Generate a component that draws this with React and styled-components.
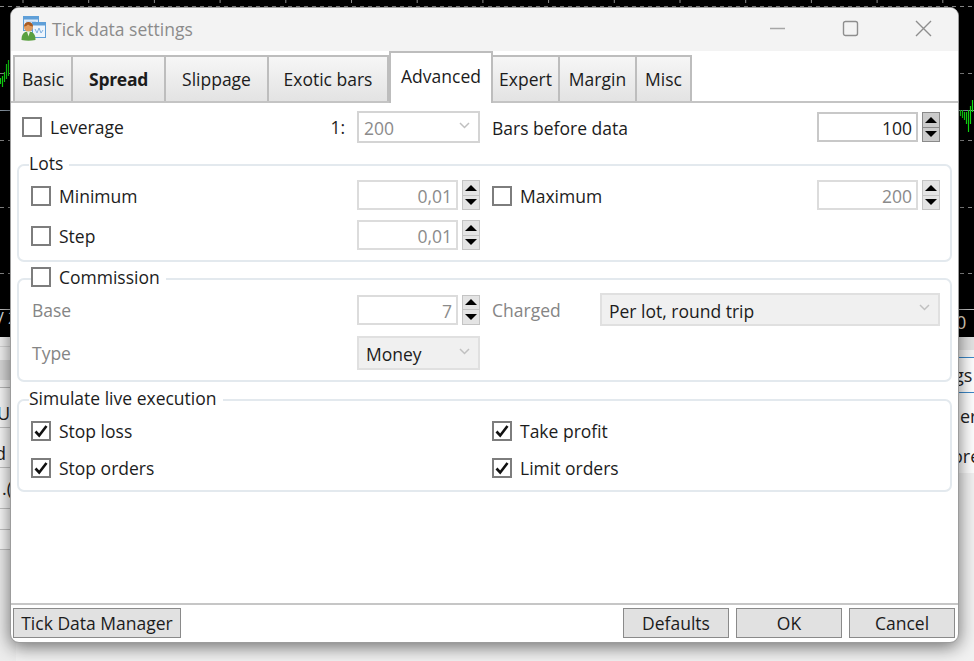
import React from 'react';
import styled, { createGlobalStyle } from 'styled-components';

const Global = createGlobalStyle`
  html, body { margin: 0; padding: 0; background: #f2f2f2; }
  * { box-sizing: border-box; }
`;

const FONT = `"Open Sans", "Noto Sans", "Liberation Sans", sans-serif`;

const Desk = styled.div`
  position: relative;
  width: 974px;
  height: 661px;
  overflow: hidden;
  background: #f2f2f2;
  font-family: ${FONT};
  font-size: 17.5px;
  color: #1c1c1c;
`;
const ChartArea = styled.svg`
  display: block;
  width: 974px;
  height: 337px;
  background: #000;
`;
const Behind = styled.div`
  display: flex;
  justify-content: space-between;
  height: 324px;
`;
const SideList = styled.div`
  width: 16px;
  display: flex;
  flex-direction: column;
`;
const SideRow = styled.div`
  height: ${p => p.$h}px;
  background: ${p => p.$bg || '#f5f5f5'};
  border-bottom: 1px solid ${p => p.$line || 'transparent'};
  font-size: 18px;
  line-height: ${p => p.$h + (p.$drop || 0) * 2}px;
  white-space: nowrap;
  color: #222;
  overflow: hidden;
`;
const SideText = styled.span`
  display: inline-block;
  margin-left: ${p => p.$shift || 0}px;
`;

const Window = styled.div`
  position: absolute;
  left: 10px;
  top: 7px;
  width: 949px;
  height: 636px;
  display: flex;
  flex-direction: column;
  background: #fff;
  border: 1px solid #9c9c9c;
  border-radius: 9px;
  overflow: hidden;
  box-shadow: 0 4px 18px rgba(0, 0, 0, 0.55);
`;
const TitleBar = styled.div`
  flex: none;
  height: 43px;
  background: #f3f3f3;
  display: flex;
  align-items: center;
  padding-left: 10px;
`;
const AppIcon = styled.svg`
  width: 26px;
  height: 25px;
  flex: none;
  margin-bottom: 3px;
`;
const TitleText = styled.div`
  margin-left: 5px;
  color: #8b8b8b;
  margin-bottom: 1px;
`;
const WindowButtons = styled.div`
  margin-left: auto;
  margin-bottom: 2px;
  display: flex;
  align-items: center;
  padding-right: 26px;
  gap: 56px;
`;
const WinIcon = styled.svg`
  width: 17px;
  height: 17px;
  display: block;
`;

const TabStrip = styled.div`
  flex: none;
  height: 52px;
  display: flex;
  align-items: flex-end;
  padding-left: 2px;
  border-bottom: 2px solid #c4c4c4;
`;
const Tab = styled.div`
  width: ${p => p.$w}px;
  height: ${p => (p.$active ? 52 : 46)}px;
  margin-bottom: ${p => (p.$active ? -2 : 0)}px;
  display: flex;
  align-items: center;
  justify-content: center;
  padding-bottom: ${p => (p.$active ? 4 : 0)}px;
  background: ${p => (p.$active ? '#fff' : 'linear-gradient(#f6f6f6, #e3e3e3)')};
  border: 2px solid #bdbdbd;
  border-bottom: 0;
  border-left-width: ${p => (p.$first ? 2 : 0)}px;
  font-weight: ${p => (p.$bold ? 700 : 400)};
  letter-spacing: ${p => (p.$bold ? '-0.3px' : '0')};
  position: relative;
  z-index: ${p => (p.$active ? 1 : 0)};
`;

const Body = styled.div`
  flex: 1;
  display: flex;
  flex-direction: column;
  padding: 8px 6px 0;
`;
const Row = styled.div`
  display: grid;
  grid-template-columns: 1fr 123px 337px 123px;
  align-items: center;
  height: ${p => p.$h || 30}px;
`;
const LeftCell = styled.div`
  display: flex;
  align-items: center;
  justify-content: space-between;
  padding-right: 12px;
`;
const RightCell = styled.div`
  padding-left: 12px;
  display: flex;
  align-items: center;
`;
const RightWide = styled.div`
  grid-column: 3 / 5;
  padding-left: 12px;
  display: flex;
  align-items: center;
`;
const TopRow = styled(Row)`
  padding: 0 12px 0 5px;
  height: 32px;
  ${RightCell} { padding-top: 2px; }
`;
const Group = styled.div`
  position: relative;
  margin-top: ${p => p.$mt}px;
  padding: ${p => p.$pt}px 10px ${p => p.$pb}px 12px;
  border: 2px solid #e3e9ee;
  border-radius: 7px;
  display: flex;
  flex-direction: column;
  gap: ${p => p.$gap}px;
`;
const Legend = styled.div`
  position: absolute;
  left: ${p => p.$left}px;
  top: -14px;
  padding: 0 6px 0 0;
  background: #fff;
  display: flex;
  align-items: center;
  height: 22px;
  line-height: 22px;
`;

const BoxLabel = styled.div`
  display: flex;
  align-items: center;
  gap: 8px;
  white-space: nowrap;
`;
const LotsRow = styled(Row)`
  ${BoxLabel} { padding-top: 2px; }
`;
const Box = styled.div`
  width: 20px;
  height: 20px;
  flex: none;
  border: 2px solid #7d7d7d;
  background: #fff;
  display: flex;
  align-items: center;
  justify-content: center;
`;
const Tick = styled.svg`
  width: 16px;
  height: 16px;
`;
const Label = styled.span`
  color: #1c1c1c;
  white-space: nowrap;
`;
const MutedLabel = styled.span`
  color: #858585;
  white-space: nowrap;
  padding-left: 1px;
`;
const ChargedLabel = styled(MutedLabel)`
  width: 108px;
  flex: none;
  padding-left: 0;
`;
const SpinField = styled.div`
  display: flex;
  gap: 4px;
  height: 30px;
`;
const NumberBox = styled.div`
  width: 101px;
  height: 30px;
  border: 2px solid ${p => (p.$on ? '#c8c8c8' : '#dcdcdc')};
  background: #fff;
  text-align: right;
  padding-right: 4px;
  line-height: 28px;
  color: ${p => (p.$on ? '#1c1c1c' : '#8b8b8b')};
`;
const Spinner = styled.div`
  width: 18px;
  height: 30px;
  display: flex;
  flex-direction: column;
  border: 1px solid ${p => (p.$on ? '#8a8a8a' : '#c4c4c4')};
  background: ${p => (p.$on ? '#cbcbcb' : '#e4e4e4')};
`;
const SpinHalf = styled.div`
  flex: 1;
  display: flex;
  align-items: center;
  justify-content: center;
  border-top: ${p => (p.$lower ? `1px solid ${p.$on ? '#8a8a8a' : '#c4c4c4'}` : 'none')};
`;
const Arrow = styled.div`
  width: 0;
  height: 0;
  border-left: 6px solid transparent;
  border-right: 6px solid transparent;
  ${p => (p.$down ? 'border-top: 6px solid #000;' : 'border-bottom: 6px solid #000;')}
`;
const SelectBox = styled.div`
  flex: ${p => (p.$grow ? 1 : 'none')};
  width: ${p => (p.$grow ? 'auto' : '123px')};
  height: ${p => p.$h || 33}px;
  display: flex;
  align-items: center;
  justify-content: space-between;
  padding: 0 8px 0 ${p => (p.$filled ? 7 : 5)}px;
  border: 2px solid ${p => (p.$filled ? '#e0e0e0' : '#d4d4d4')};
  background: ${p => (p.$filled ? '#f0f0f0' : '#fff')};
  color: ${p => (p.$filled ? '#1c1c1c' : '#8b8b8b')};
`;
const SelectValue = styled.span`
  padding-top: 2px;
`;
const Chevron = styled.svg`
  width: 11px;
  height: 7px;
  flex: none;
  margin-bottom: 4px;
`;

const Footer = styled.div`
  flex: none;
  height: 39px;
  border-top: 2px solid #c6c6c6;
  display: flex;
  align-items: flex-start;
  padding: 3px 3px 0 2px;
`;
const Actions = styled.div`
  margin-left: auto;
  display: flex;
  gap: 7px;
`;
const Button = styled.div`
  width: ${p => p.$w || 106}px;
  height: 30px;
  background: #e1e1e1;
  border: 1px solid #8a8a8a;
  display: flex;
  align-items: center;
  justify-content: center;
  white-space: nowrap;
`;

const Check = ({ on }) => (
  <Box>
    {on && (
      <Tick viewBox="0 0 16 16">
        <path d="M2.5 8.5 L6.2 12.5 L13.5 3" fill="none" stroke="#111" strokeWidth="2.6" />
      </Tick>
    )}
  </Box>
);
const CheckLabel = ({ on, children }) => (
  <BoxLabel>
    <Check on={on} />
    <Label>{children}</Label>
  </BoxLabel>
);
const Spin = ({ on, value }) => (
  <SpinField>
    <NumberBox $on={on}>{value}</NumberBox>
    <Spinner $on={on}>
      <SpinHalf $on={on}><Arrow /></SpinHalf>
      <SpinHalf $on={on} $lower><Arrow $down /></SpinHalf>
    </Spinner>
  </SpinField>
);
const Select = ({ children, filled, grow, h }) => (
  <SelectBox $filled={filled} $grow={grow} $h={h}>
    <SelectValue>{children}</SelectValue>
    <Chevron viewBox="0 0 11 7">
      <path d="M1 1 L5.5 5.5 L10 1" fill="none" stroke="#c0c0c0" strokeWidth="1.5" />
    </Chevron>
  </SelectBox>
);

const tabs = [
  { t: 'Basic', w: 60, first: true },
  { t: 'Spread', w: 93, bold: true },
  { t: 'Slippage', w: 103 },
  { t: 'Exotic bars', w: 120 },
  { t: 'Advanced', w: 104, active: true, first: true },
  { t: 'Expert', w: 67 },
  { t: 'Margin', w: 77 },
  { t: 'Misc', w: 55 },
];

const ticks = Array.from({ length: 15 }, (_, i) => 23 + i * 65.7);
const leftRows = [
  { h: 10, bg: '#f4f4f4', line: '#d8d8d8' },
  { h: 13, bg: '#f4f4f4' },
  { h: 20, bg: '#dadada' },
  { h: 8, bg: '#f4f4f4', line: '#b8b8b8' },
  { h: 40, bg: '#fafafa', line: '#c4c4c4', t: 'US', drop: 5, shift: -3 },
  { h: 40, bg: '#fafafa', line: '#c4c4c4', t: 'd', drop: 5, shift: -5 },
  { h: 41, bg: '#fafafa', line: '#c4c4c4', t: '.(', shift: 2 },
  { h: 21, bg: '#fafafa', line: '#c4c4c4' },
  { h: 20, bg: '#fafafa', line: '#c4c4c4' },
  { h: 111, bg: '#ededed' },
];
const rightRows = [
  { h: 13, bg: '#e4e4e4' },
  { h: 8, bg: '#f6f6f6', line: '#3c88c8' },
  { h: 35, bg: '#fff', line: '#3c88c8', t: 'gs', shift: -4 },
  { h: 40, bg: '#fff', t: 'er', drop: 3, shift: 2 },
  { h: 40, bg: '#fff', t: 'ore', drop: 3, shift: -6 },
  { h: 188, bg: '#f2f2f2' },
];

export default function App() {
  return (
    <Desk>
      <Global />
      <ChartArea viewBox="0 0 974 337">
        <g stroke="#8a8a8a" strokeDasharray="4 4" strokeWidth="1">
          <line x1="0" x2="974" y1="6.5" y2="6.5" />
          <line x1="0" x2="974" y1="73.5" y2="73.5" />
          <line x1="0" x2="974" y1="140.5" y2="140.5" />
          <line x1="0" x2="974" y1="207.5" y2="207.5" />
          <line x1="0" x2="974" y1="273.5" y2="273.5" />
        </g>
        <line x1="0" x2="974" y1="110.5" y2="110.5" stroke="#8c9aa8" />
        <line x1="0" x2="974" y1="309.5" y2="309.5" stroke="#bdbdbd" />
        {ticks.map(x => (
          <line key={x} x1={x} x2={x} y1="0" y2="3" stroke="#9a9a9a" />
        ))}
        <path d="M0.5 78 V84 M2.5 76 V87 M4.5 72 V82 M6.5 64 V79 M8.5 60 V76" stroke="#12e012" strokeWidth="1.2" />
        <path d="M960.5 110 V116 M962.5 110 V118 M964.5 112 V120 M966.5 112 V124 M968.5 110 V132 M970.5 106 V124 M972.5 100 V112" stroke="#12e012" strokeWidth="1.2" />
        <text x="-2" y="324" fill="#e8e8e8" fontSize="16" fontFamily="Open Sans">/ 2</text>
        <text x="956" y="329" fill="#e8dcc8" fontSize="18" fontFamily="Open Sans">0</text>
      </ChartArea>
      <Behind>
        <SideList>
          {leftRows.map((r, i) => (
            <SideRow key={i} $h={r.h} $bg={r.bg} $line={r.line} $drop={r.drop}>
              {r.t && <SideText $shift={r.shift}>{r.t}</SideText>}
            </SideRow>
          ))}
        </SideList>
        <SideList>
          {rightRows.map((r, i) => (
            <SideRow key={i} $h={r.h} $bg={r.bg} $line={r.line} $drop={r.drop}>
              {r.t && <SideText $shift={r.shift}>{r.t}</SideText>}
            </SideRow>
          ))}
        </SideList>
      </Behind>

      <Window>
        <TitleBar>
          <AppIcon viewBox="0 0 26 25">
            <rect x="2.5" y="0.5" width="15" height="14" fill="#dbe9f8" stroke="#5f9fd8" />
            <rect x="2.5" y="0.5" width="15" height="3" fill="#5f9fd8" />
            <path d="M5 6 h10 M5 9 h10" stroke="#a9c9ea" />
            <rect x="11.5" y="6.5" width="13" height="15" fill="#eef5fc" stroke="#5f9fd8" />
            <rect x="11.5" y="6.5" width="13" height="3" fill="#5f9fd8" />
            <path d="M14 13 l2 4 l2 -5 l2 5 l2 -3" stroke="#7fb0e0" fill="none" />
            <circle cx="7.5" cy="11" r="4.5" fill="#e09a5c" />
            <path d="M3 10.5 a4.5 4.5 0 0 1 9 0 a9 9 0 0 1 -5 -2 a5 5 0 0 1 -4 2" fill="#a85a20" />
            <path d="M0.5 24 c0 -5.5 2 -8.5 7 -8.5 s7 3 7 8.5 q-7 1.6 -14 0" fill="#5aa040" />
            <path d="M6 15.5 h3 l-1.5 5 z" fill="#eef4e6" />
          </AppIcon>
          <TitleText>Tick data settings</TitleText>
          <WindowButtons>
            <WinIcon viewBox="0 0 17 17">
              <line x1="1" x2="16" y1="8.5" y2="8.5" stroke="#a6a6a6" strokeWidth="1.3" />
            </WinIcon>
            <WinIcon viewBox="0 0 17 17">
              <rect x="1.5" y="1.5" width="14" height="14" rx="2" fill="none" stroke="#8e8e8e" strokeWidth="1.4" />
            </WinIcon>
            <WinIcon viewBox="0 0 17 17">
              <path d="M1 1 L16 16 M16 1 L1 16" stroke="#8e8e8e" strokeWidth="1.4" />
            </WinIcon>
          </WindowButtons>
        </TitleBar>

        <TabStrip>
          {tabs.map(t => (
            <Tab key={t.t} $w={t.w} $bold={t.bold} $active={t.active} $first={t.first}>{t.t}</Tab>
          ))}
        </TabStrip>

        <Body>
          <TopRow>
            <LeftCell>
              <CheckLabel>Leverage</CheckLabel>
              <Label>1:</Label>
            </LeftCell>
            <Select h={32}>200</Select>
            <RightCell><Label>Bars before data</Label></RightCell>
            <Spin on value="100" />
          </TopRow>

          <Group $mt={21} $pt={14} $pb={10} $gap={10}>
            <Legend $left={10}>Lots</Legend>
            <LotsRow>
              <CheckLabel>Minimum</CheckLabel>
              <Spin value="0,01" />
              <RightCell><CheckLabel>Maximum</CheckLabel></RightCell>
              <Spin value="200" />
            </LotsRow>
            <LotsRow>
              <CheckLabel>Step</CheckLabel>
              <Spin value="0,01" />
            </LotsRow>
          </Group>

          <Group $mt={16} $pt={13} $pb={10} $gap={10}>
            <Legend $left={12}><CheckLabel>Commission</CheckLabel></Legend>
            <Row $h={33}>
              <MutedLabel>Base</MutedLabel>
              <Spin value="7" />
              <RightWide>
                <ChargedLabel>Charged</ChargedLabel>
                <Select filled grow>Per lot, round trip</Select>
              </RightWide>
            </Row>
            <Row $h={34}>
              <MutedLabel>Type</MutedLabel>
              <Select filled h={34}>Money</Select>
            </Row>
          </Group>

          <Group $mt={17} $pt={18} $pb={14} $gap={17}>
            <Legend $left={10}>Simulate live execution</Legend>
            <Row $h={20}>
              <CheckLabel on>Stop loss</CheckLabel>
              <span />
              <RightCell><CheckLabel on>Take profit</CheckLabel></RightCell>
            </Row>
            <Row $h={20}>
              <CheckLabel on>Stop orders</CheckLabel>
              <span />
              <RightCell><CheckLabel on>Limit orders</CheckLabel></RightCell>
            </Row>
          </Group>
        </Body>

        <Footer>
          <Button $w={168}>Tick Data Manager</Button>
          <Actions>
            <Button>Defaults</Button>
            <Button>OK</Button>
            <Button>Cancel</Button>
          </Actions>
        </Footer>
      </Window>
    </Desk>
  );
}
